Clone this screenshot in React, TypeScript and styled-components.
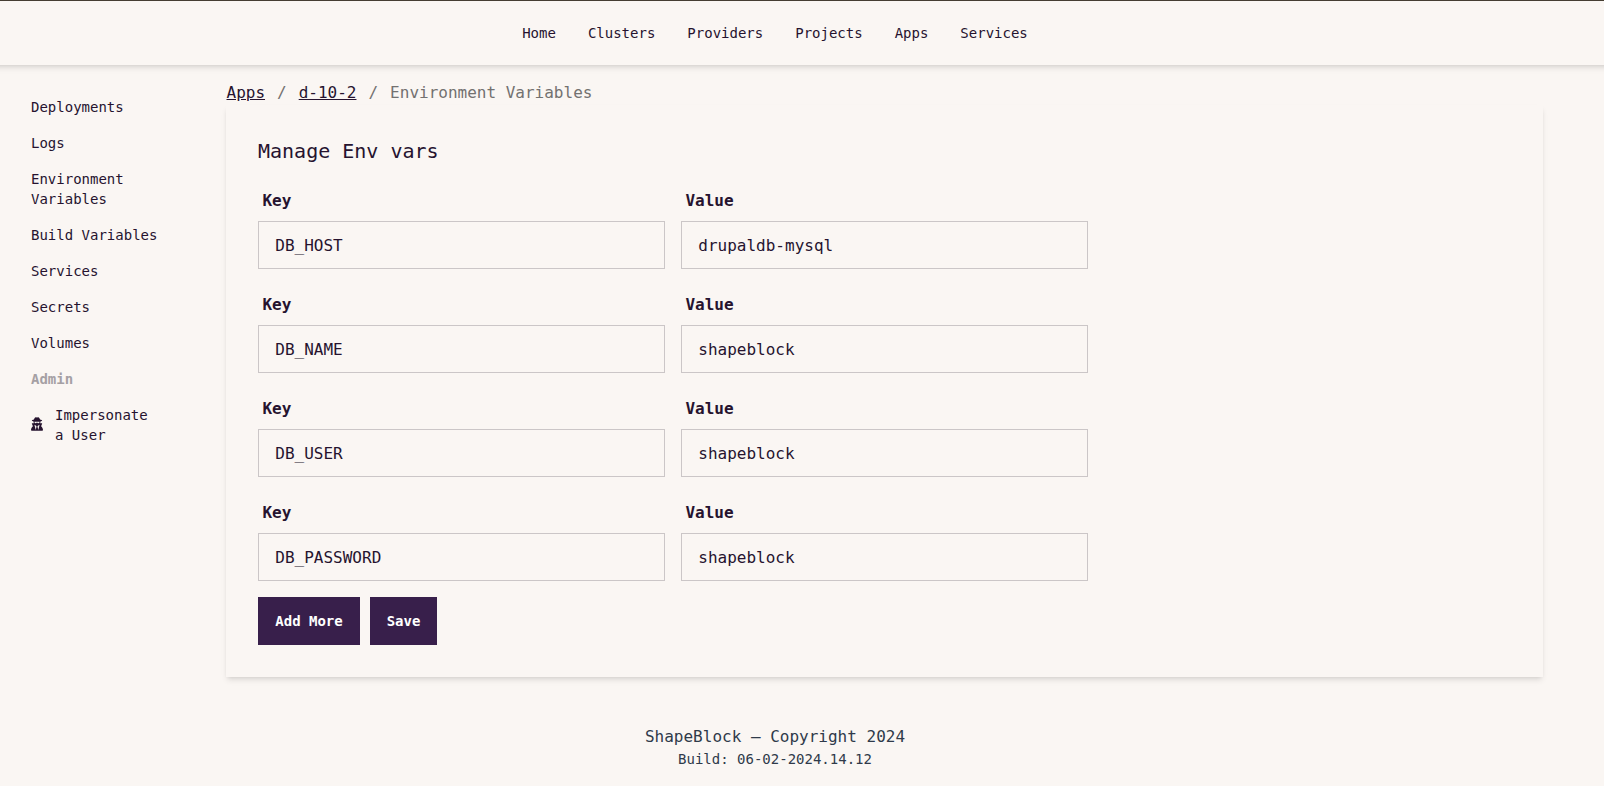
import React from "react";
import styled, { createGlobalStyle } from "styled-components";
import { FaUserSecret } from "react-icons/fa6";

const ink = "#26132f";
const shadow = "0 4px 6px -1px rgba(0, 0, 0, 0.1), 0 2px 4px -2px rgba(0, 0, 0, 0.1)";

const GlobalStyle = createGlobalStyle`
  *, *::before, *::after { box-sizing: border-box; }
  body {
    margin: 0;
    background: #faf6f3;
    color: ${ink};
    font-family: Menlo, "DejaVu Sans Mono", monospace;
    font-size: 16px;
    line-height: 24px;
    overflow: hidden;
  }
  a { color: inherit; }
`;

const Page = styled.div`
  min-height: 786px;
`;

const Header = styled.header`
  height: 65px;
  margin: 0 -8px;
  padding-right: 54px;
  border-top: 1px solid #453d32;
  display: flex;
  align-items: center;
  justify-content: center;
  box-shadow: ${shadow};
`;

const TopNav = styled.nav`
  display: flex;
  gap: 32px;
`;

const NavLink = styled.a`
  font-size: 14px;
  line-height: 20px;
  text-decoration: none;
`;

const Body = styled.div`
  display: flex;
`;

const Sidebar = styled.aside`
  flex: none;
  width: 226px;
  padding: 24px 60px 0 31px;
`;

const Menu = styled.ul`
  list-style: none;
  margin: 0;
  padding: 0;
`;

const MenuItem = styled.li<{ $heading?: boolean }>`
  display: flex;
  align-items: center;
  gap: 12px;
  padding: 8px 0;
  font-size: 14px;
  line-height: 20px;
  font-weight: ${(p) => (p.$heading ? 700 : 400)};
  color: ${(p) => (p.$heading ? "#a5a0a4" : ink)};

  svg { flex: none; width: 12px; height: 14px; margin-bottom: 2px; }
`;

const MenuText = styled.span<{ $narrow?: boolean }>`
  width: ${(p) => (p.$narrow ? "94px" : "auto")};
`;

const Main = styled.main`
  flex: 1;
  padding: 16px 61px 0 0;
`;

const Breadcrumbs = styled.nav`
  display: flex;
  gap: 12px;
  height: 24px;
  padding-left: 0.5px;
  color: #737170;
`;

const Crumb = styled.a`
  color: ${ink};
  text-decoration: underline;
`;

const Card = styled.section`
  padding: 32px;
  box-shadow: ${shadow};
`;

const Title = styled.h2`
  margin: 0 0 16px;
  font-size: 20px;
  line-height: 28px;
  font-weight: 400;
`;

const Form = styled.form`
  display: flex;
  flex-direction: column;
  gap: 16px;
`;

const FieldRow = styled.div`
  display: grid;
  grid-template-columns: 407px 407px;
  gap: 16px;
`;

const Field = styled.label`
  display: flex;
  flex-direction: column;
`;

const FieldLabel = styled.span`
  padding: 8px 4.4px;
  font-weight: 700;
`;

const Input = styled.input`
  width: 100%;
  height: 48px;
  padding: 0 16.3px;
  border: 1px solid #cbc6c7;
  border-radius: 0;
  background: transparent;
  color: ${ink};
  font: inherit;
  outline: none;
`;

const Actions = styled.div`
  display: flex;
  gap: 10px;
`;

const Button = styled.button<{ $width: number }>`
  width: ${(p) => p.$width}px;
  height: 48px;
  padding: 0;
  border: 0;
  background: #381f4b;
  color: #fff;
  font-family: inherit;
  font-size: 14px;
  font-weight: 700;
`;

const Footer = styled.footer`
  padding: 48px 54px 0 0;
  text-align: center;
  color: #2f3a4a;
`;

const FooterLine = styled.p<{ $small?: boolean }>`
  margin: 0;
  font-size: ${(p) => (p.$small ? 14 : 16)}px;
  line-height: ${(p) => (p.$small ? 21 : 24)}px;
`;

const links = ["Home", "Clusters", "Providers", "Projects", "Apps", "Services"];
const sections = [
  "Deployments",
  "Logs",
  "Environment Variables",
  "Build Variables",
  "Services",
  "Secrets",
  "Volumes",
];
const variables = [
  ["DB_HOST", "drupaldb-mysql"],
  ["DB_NAME", "shapeblock"],
  ["DB_USER", "shapeblock"],
  ["DB_PASSWORD", "shapeblock"],
];

export default function App() {
  return (
    <Page>
      <GlobalStyle />
      <Header>
        <TopNav>
          {links.map((l) => (
            <NavLink key={l} href="#">{l}</NavLink>
          ))}
        </TopNav>
      </Header>
      <Body>
        <Sidebar>
          <Menu>
            {sections.map((s) => (
              <MenuItem key={s}><MenuText>{s}</MenuText></MenuItem>
            ))}
            <MenuItem $heading><MenuText>Admin</MenuText></MenuItem>
            <MenuItem>
              <FaUserSecret />
              <MenuText $narrow>Impersonate a User</MenuText>
            </MenuItem>
          </Menu>
        </Sidebar>
        <Main>
          <Breadcrumbs>
            <Crumb href="#">Apps</Crumb>
            <span>/</span>
            <Crumb href="#">d-10-2</Crumb>
            <span>/</span>
            <span>Environment Variables</span>
          </Breadcrumbs>
          <Card>
            <Title>Manage Env vars</Title>
            <Form onSubmit={(e) => e.preventDefault()}>
              {variables.map(([key, value]) => (
                <FieldRow key={key}>
                  <Field>
                    <FieldLabel>Key</FieldLabel>
                    <Input defaultValue={key} />
                  </Field>
                  <Field>
                    <FieldLabel>Value</FieldLabel>
                    <Input defaultValue={value} />
                  </Field>
                </FieldRow>
              ))}
              <Actions>
                <Button type="button" $width={102}>Add More</Button>
                <Button type="submit" $width={67}>Save</Button>
              </Actions>
            </Form>
          </Card>
        </Main>
      </Body>
      <Footer>
        <FooterLine>ShapeBlock — Copyright 2024</FooterLine>
        <FooterLine $small>Build: 06-02-2024.14.12</FooterLine>
      </Footer>
    </Page>
  );
}
